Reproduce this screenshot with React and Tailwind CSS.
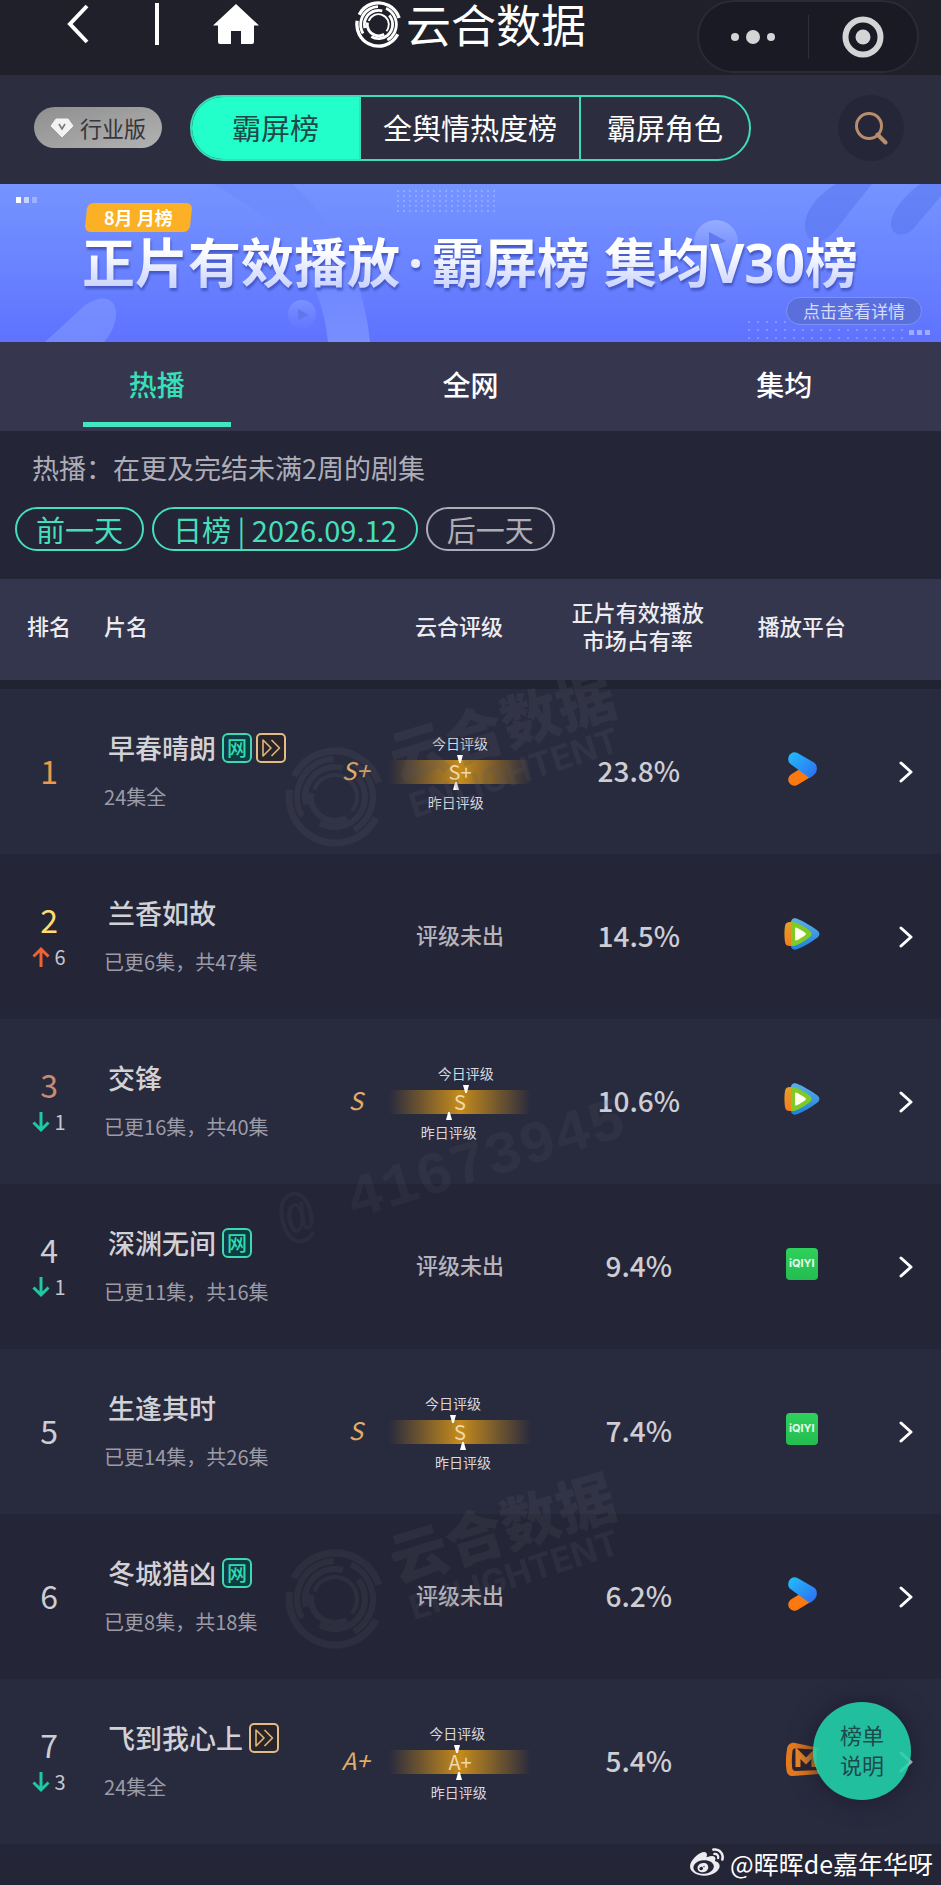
import { useState } from "react";
import { FaWeibo } from "react-icons/fa";
import clsx from "clsx";

const NAV = [
  { id: "screen", label: "霸屏榜", pad: "px-10" },
  { id: "opinion", label: "全舆情热度榜", pad: "px-[22px]" },
  { id: "role", label: "霸屏角色", pad: "px-[26px]" },
];

const TABS = ["热播", "全网", "集均"];

const SHOWS = [
  {
    rank: 1,
    title: "早春晴朗",
    tags: ["net", "fast"],
    info: "24集全",
    grade: "S+",
    today: 50,
    yesterday: 47,
    share: "23.8%",
    platform: "youku",
  },
  {
    rank: 2,
    change: 6,
    title: "兰香如故",
    tags: [],
    info: "已更6集，共47集",
    share: "14.5%",
    platform: "tencent",
  },
  {
    rank: 3,
    change: -1,
    title: "交锋",
    tags: [],
    info: "已更16集，共40集",
    grade: "S",
    today: 54,
    yesterday: 42,
    share: "10.6%",
    platform: "tencent",
  },
  {
    rank: 4,
    change: -1,
    title: "深渊无间",
    tags: ["net"],
    info: "已更11集，共16集",
    share: "9.4%",
    platform: "iqiyi",
  },
  {
    rank: 5,
    title: "生逢其时",
    tags: [],
    info: "已更14集，共26集",
    grade: "S",
    today: 45,
    yesterday: 52,
    share: "7.4%",
    platform: "iqiyi",
  },
  {
    rank: 6,
    title: "冬城猎凶",
    tags: ["net"],
    info: "已更8集，共18集",
    share: "6.2%",
    platform: "youku",
  },
  {
    rank: 7,
    change: -3,
    title: "飞到我心上",
    tags: ["fast"],
    info: "24集全",
    grade: "A+",
    today: 48,
    yesterday: 49,
    share: "5.4%",
    platform: "mango",
  },
];

const RANK_COLORS = {
  1: "text-[#f0984a]",
  2: "text-[#ffdc70]",
  3: "text-[#c98b72]",
};

// radius, stroke width, start angle, sweep
const RINGS = [
  [46, 7, -153, 135],
  [46, 7, 27, 162],
  [38, 6, 150, 118],
  [38, 6, -65, 125],
  [30, 6, -40, 160],
  [30, 6, 165, 120],
  [24, 6, 60, 130],
  [22, 4, -160, 200],
];

function Rings() {
  return RINGS.map(([r, width, start, sweep]) => (
    <circle
      key={`${r}-${start}`}
      cx="50"
      cy="50"
      r={r}
      fill="none"
      stroke="currentColor"
      strokeWidth={width}
      pathLength={360}
      strokeDasharray={`${sweep} ${360 - sweep}`}
      transform={`rotate(${start} 50 50)`}
    />
  ));
}

function AppHeader() {
  return (
    <header className="grid grid-cols-[1fr_auto_1fr] items-start h-[75px] bg-[#1f2029] text-white">
      <div className="flex items-center h-12 pl-[66px]">
        <button aria-label="返回">
          <svg width="24" height="40" viewBox="0 0 24 40" fill="none" stroke="currentColor" strokeWidth="4">
            <path d="M21 2 4 20l17 18" />
          </svg>
        </button>
        <span className="w-1 h-[42px] ml-[65px] bg-white" />
        <button aria-label="首页" className="ml-[54px]">
          <svg width="46" height="40" viewBox="0 0 46 40" fill="currentColor">
            <path d="M23 0 46 21.5H41V38a2 2 0 0 1-2 2H28V27H18v13H7a2 2 0 0 1-2-2V21.5H0Z" />
          </svg>
        </button>
      </div>
      <div className="flex items-center h-12 gap-1">
        <svg width="47" height="47" viewBox="0 0 100 100">
          <Rings />
        </svg>
        <h1 className="text-[45px] leading-[48px]">云合数据</h1>
      </div>
      <div className="justify-self-end flex items-center w-[222px] h-[73px] mr-[22px] rounded-full bg-[#191a23] border-2 border-[#2a2b35] text-[#d4d4d6]">
        <button aria-label="更多" className="flex-1 flex justify-center">
          <svg width="44" height="16" viewBox="0 0 44 16" fill="currentColor">
            <circle cx="4" cy="8" r="4" />
            <circle cx="22" cy="8" r="7" />
            <circle cx="40" cy="8" r="4" />
          </svg>
        </button>
        <span className="w-px h-11 bg-[#2d2e38]" />
        <button aria-label="关闭" className="flex-1 flex justify-center">
          <svg width="42" height="42" viewBox="0 0 42 42">
            <circle cx="21" cy="21" r="17.5" fill="none" stroke="currentColor" strokeWidth="6" />
            <circle cx="21" cy="21" r="7.5" fill="currentColor" />
          </svg>
        </button>
      </div>
    </header>
  );
}

function Toolbar() {
  const [active, setActive] = useState("screen");

  return (
    <div className="flex items-center h-[109px] pb-1 pl-[34px] pr-[37px] bg-[#2c2e40]">
      <button className="flex items-center gap-1.5 h-[41px] px-4 rounded-full bg-linear-to-br from-[#8f8f90] to-[#b2b2b2] text-[#35353b] text-[22px] whitespace-nowrap">
        <svg width="24" height="20" viewBox="0 0 24 20">
          <path d="M6 1h12l5 7-11 11L1 8Z" fill="#f2f2f2" stroke="#f2f2f2" strokeLinejoin="round" />
          <path d="m9 6 3 5 3-5" fill="none" stroke="#77777a" strokeWidth="1.6" />
        </svg>
        行业版
      </button>
      <nav className="flex h-[66px] ml-7 rounded-full border-2 border-[#3ddcb4] overflow-hidden text-[29px] whitespace-nowrap divide-x-2 divide-[#3ddcb4]">
        {NAV.map((item) => (
          <button
            key={item.id}
            onClick={() => setActive(item.id)}
            className={clsx(
              item.pad,
              active === item.id ? "bg-[#22ffca] text-[#1f4a4a]" : "text-white"
            )}
          >
            {item.label}
          </button>
        ))}
      </nav>
      <button aria-label="搜索" className="flex items-center justify-center size-[66px] ml-auto rounded-full bg-[#252638]">
        <svg width="34" height="34" viewBox="0 0 34 34" fill="none" stroke="#b98d6b" strokeWidth="3">
          <circle cx="15" cy="15" r="12.5" />
          <path d="m23.5 23.5 8 8" strokeWidth="4" strokeLinecap="round" />
        </svg>
      </button>
    </div>
  );
}

function BannerArt() {
  return (
    <svg
      className="absolute inset-0 size-full"
      viewBox="0 0 941 158"
      preserveAspectRatio="xMidYMid slice"
    >
      <defs>
        <pattern id="dots" width="6" height="5" patternUnits="userSpaceOnUse">
          <circle cx="2" cy="2" r="0.9" fill="#fff" />
        </pattern>
        <pattern id="dots-wide" width="9" height="8" patternUnits="userSpaceOnUse">
          <circle cx="2" cy="2" r="1" fill="#fff" />
        </pattern>
        <linearGradient id="band" x1="0" y1="0" x2="0" y2="1">
          <stop offset="0" stopColor="#5f7cf5" stopOpacity="0.3" />
          <stop offset="0.5" stopColor="#7c97ff" stopOpacity="0.3" />
          <stop offset="1" stopColor="#8ea6ff" stopOpacity="0.55" />
        </linearGradient>
        <linearGradient id="bubble" x1="0" y1="0" x2="0" y2="1">
          <stop offset="0" stopColor="#a9bbff" stopOpacity="0.7" />
          <stop offset="1" stopColor="#8ba2ff" stopOpacity="0.1" />
        </linearGradient>
      </defs>
      <path d="M213 0h79c45 40 72 95 78 158h-42C322 90 280 35 213 0Z" fill="url(#band)" />
      <path d="M45 158 84 122c16-12 32-10 32 8 0 10-5 20-12 28Z" fill="#8ba4ff" opacity="0.45" />
      <path d="M836 0c-20 12-31 28-31 42 0 20 20 20 32 2L872 0Z" fill="#5671ee" opacity="0.5" />
      <path d="M920 0c-18 14-29 28-29 40 0 12 14 14 22 5L941 12V0Z" fill="#5671ee" opacity="0.5" />
      <circle cx="716" cy="58" r="22" fill="url(#bubble)" />
      <path d="M709 48v17l17-8Z" fill="#6079ee" />
      <circle cx="302" cy="130" r="14" fill="url(#bubble)" opacity="0.5" />
      <path d="M298 125v11l11-5Z" fill="#5f77ec" />
      <rect x="395" y="6" width="102" height="24" fill="url(#dots)" opacity="0.3" />
      <rect x="748" y="134" width="156" height="24" fill="url(#dots-wide)" opacity="0.3" />
      <g fill="#fff">
        <rect x="16" y="13" width="5" height="6" />
        <rect x="24" y="13" width="5" height="6" opacity="0.6" />
        <rect x="32" y="13" width="5" height="6" opacity="0.3" />
        <rect x="909" y="146" width="5" height="5" opacity="0.4" />
        <rect x="917" y="146" width="5" height="5" opacity="0.4" />
        <rect x="925" y="146" width="5" height="5" opacity="0.4" />
      </g>
    </svg>
  );
}

function Banner() {
  return (
    <section className="relative h-[158px] bg-linear-to-b from-[#7694ff] to-[#5f72ff] overflow-hidden">
      <BannerArt />
      <div className="relative flex flex-col h-full pt-[19px] pb-[17px] pl-[82px] pr-[19px]">
        <div className="relative isolate self-start h-[29px] ml-1 px-[18px] text-lg leading-7 font-bold text-white">
          <span className="absolute inset-0 -z-10 -skew-x-6 rounded-md bg-[#fbb025]" />
          8月 月榜
        </div>
        <h2 className="self-start text-[53px] leading-[62px] font-bold whitespace-nowrap bg-linear-to-b from-white from-30% to-[#c9d2ff] to-90% bg-clip-text text-transparent drop-shadow-[1px_3px_1px_#4558c8] font-['Open_Sans','Noto_Sans_CJK_SC',sans-serif]">
          正片有效播放<span className="mx-2">·</span>霸屏榜 集均V30榜
        </h2>
        <button className="self-end mt-auto h-7 px-4 rounded-full bg-[#5a6fdc] border border-[#7d92f5] text-[17px] leading-6 text-[#d3daff]">
          点击查看详情
        </button>
      </div>
    </section>
  );
}

function Tabs() {
  const [active, setActive] = useState("热播");

  return (
    <div className="grid grid-cols-3 h-[89px] bg-[#36364f] text-[28px]">
      {TABS.map((tab) => (
        <button
          key={tab}
          onClick={() => setActive(tab)}
          className={clsx(
            "flex flex-col items-center pb-1 font-medium",
            active === tab ? "text-[#36e0b8]" : "text-white"
          )}
        >
          <span className="flex-1 flex items-center pt-1">{tab}</span>
          <span className={clsx("w-[148px] h-[5px]", active === tab && "bg-[#42e6c0]")} />
        </button>
      ))}
    </div>
  );
}

function DateBar() {
  return (
    <section className="pt-[19px] pb-7">
      <p className="pl-8 text-[27px] leading-9 text-[#adadb8]">
        热播：在更及完结未满2周的剧集
      </p>
      <div className="flex gap-2 mt-[21px] pl-[15px] text-[29px] leading-10 text-[#45dfbb]">
        <button className="px-[19px] rounded-full border-2 border-current">前一天</button>
        <button className="px-[19px] rounded-full border-2 border-current">日榜 | 2026.09.12</button>
        <button className="px-[19px] rounded-full border-2 border-current text-[#adadb8]">后一天</button>
      </div>
    </section>
  );
}

function RankChange({ value }) {
  const up = value > 0;
  return (
    <div className="flex items-center justify-center gap-1 mt-1 text-xl leading-7 text-[#c6c6ce]">
      <svg
        width="18"
        height="22"
        viewBox="0 0 18 22"
        fill="none"
        strokeWidth="3"
        className={up ? "stroke-[#ee6236]" : "stroke-[#1fc9a1] rotate-180"}
      >
        <path d="M9 21V3M1.5 10.5 9 3l7.5 7.5" />
      </svg>
      {Math.abs(value)}
    </div>
  );
}

function Tag({ type }) {
  if (type === "net") {
    return (
      <span className="flex items-center justify-center size-[30px] rounded-md border-2 border-[#40d8b2] bg-[#0f3c42] text-xl leading-none font-medium text-[#2fdcb0]">
        网
      </span>
    );
  }
  return (
    <span className="flex items-center justify-center size-[30px] rounded-[5px] border-2 border-[#e2bc84] bg-[#28242c]">
      <svg width="20" height="20" viewBox="0 0 20 20" fill="none" stroke="#e2b676" strokeWidth="1.6" strokeLinejoin="round">
        <path d="M2 2v16l8-8Z" />
        <path d="m10.500 2 8 8-8 8" />
      </svg>
    </span>
  );
}

function GradeBar({ grade, today, yesterday }) {
  return (
    <div className="relative w-[142px] h-6 mx-auto bg-linear-to-r from-transparent via-[#c68b1c] to-transparent text-center text-xl leading-6 text-[#f0d9a8]">
      {grade}
      <div
        className="absolute bottom-full -mb-[3px] -translate-x-1/2 flex flex-col items-center gap-0.5 text-sm leading-5 text-[#d8d8de] whitespace-nowrap"
        style={{ left: `${today}%` }}
      >
        今日评级
        <svg width="6" height="8" viewBox="0 0 6 8" fill="#fff">
          <path d="M0 0h6L3.800 8H2.200Z" />
        </svg>
      </div>
      <div
        className="absolute top-full -mt-[2px] -translate-x-1/2 flex flex-col items-center gap-0.5 text-sm leading-5 text-[#d8d8de] whitespace-nowrap"
        style={{ left: `${yesterday}%` }}
      >
        <svg width="6" height="8" viewBox="0 0 6 8" fill="#fff">
          <path d="M0 8h6L3.800 0H2.200Z" />
        </svg>
        昨日评级
      </div>
    </div>
  );
}

function PlatformIcon({ name }) {
  if (name === "youku") {
    return (
      <svg width="36" height="36" viewBox="0 0 36 36" className="mx-auto" role="img" aria-label="优酷">
        <defs>
          <linearGradient id="yk" x1="0" y1="0" x2="1" y2="1">
            <stop offset="0.1" stopColor="#23b6fb" />
            <stop offset="1" stopColor="#2f6bf0" />
          </linearGradient>
        </defs>
        <path d="M10.500 28.500 22 21.500" stroke="#fb7a10" strokeWidth="12.500" strokeLinecap="round" />
        <path
          d="M7 2.400C9 1 11.500 1 13.500 2L30 11.500c3.600 2.500 3.700 8 1 11.200-1.500 1.800-3.500 3.300-5.500 4.300L6.500 13C3 10.300 3.800 4.700 7 2.400Z"
          fill="url(#yk)"
        />
      </svg>
    );
  }
  if (name === "tencent") {
    return (
      <svg width="36" height="32" viewBox="0 0 36 32" className="mx-auto" role="img" aria-label="腾讯视频">
        <defs>
          <linearGradient id="tx-b" x1="0" y1="0" x2="0" y2="1">
            <stop offset="0" stopColor="#5cb0e8" />
            <stop offset="1" stopColor="#1f7fdc" />
          </linearGradient>
          <linearGradient id="tx-o" x1="0" y1="0" x2="0" y2="1">
            <stop offset="0" stopColor="#e3a02a" />
            <stop offset="1" stopColor="#f57c1c" />
          </linearGradient>
        </defs>
        <path d="M7 4c0-3 3-4.500 6-3.200 7 2.800 14 7 20.500 11.700 2.500 2 2.500 5 0 7C27 24.500 20 28.500 13 31.200c-3 1.200-5.500 0-6-3Z" fill="url(#tx-b)" />
        <path d="M1 8c.5-3 2-4 5-4h3v24H6c-3 0-4.500-1-5-4-.8-5.500-.8-11 0-16Z" fill="url(#tx-o)" />
        <path d="M7 6.500C7 4 9 3.600 11 4.300c5.500 2.200 10.500 5 15 8.700 2.200 1.900 2.200 4.100 0 6-4.500 3.700-9.500 6.500-15 8.700-2 .7-4 .3-4-2.200Z" fill="#7fca25" />
        <path d="M11 10.500c0-1 .8-1.200 1.800-.8 3.200 1.500 6 3.200 8.600 5.300.8.700.8 1.300 0 2-2.600 2.100-5.400 3.800-8.600 5.300-1 .4-1.800.2-1.800-.8Z" fill="#fffff0" />
      </svg>
    );
  }
  if (name === "iqiyi") {
    return (
      <span className="flex items-center justify-center size-8 mx-auto rounded-[4px] bg-linear-to-b from-[#2fd05c] to-[#24bd50] font-['Inter',sans-serif] text-[11px] font-bold text-[#e6f8ea]">
        iQIYI
      </span>
    );
  }
  return (
    <svg width="34" height="34" viewBox="0 0 34 34" className="mx-auto" role="img" aria-label="芒果TV">
      <path d="M2 7c.5-4 3-6.500 7-6.300L34 6v26L8 34c-4 0-6-2-6.500-5.500C.5 21 .8 14 2 7Z" fill="#e87a1e" />
      <path d="M7.500 9c.3-2 1.500-3 3.500-2.800L34 8v20l-23 1c-2.500 0-3.500-1-3.800-3-.6-6-.4-11.500.3-17Z" fill="#2b2430" />
      <path d="M13 25V11l8 8 8-8v14" fill="none" stroke="#f08a2a" strokeWidth="5" />
    </svg>
  );
}

function ShowRow({ show }) {
  return (
    <tr className="h-[165px] odd:bg-[#282a3e] even:bg-[#242536]">
      <td className="pl-1 pb-1 text-center">
        <div className={clsx("text-[32px] leading-10", RANK_COLORS[show.rank] || "text-[#cdcdd4]")}>
          {show.rank}
        </div>
        {show.change && <RankChange value={show.change} />}
      </td>
      <td className="pl-2.5 pb-1">
        <div className="flex items-center gap-1.5 pl-1 text-[27px] leading-[38px] font-medium text-[#d2d2d6] whitespace-nowrap">
          {show.title}
          <span className="flex gap-1">
            {show.tags.map((tag) => (
              <Tag key={tag} type={tag} />
            ))}
          </span>
        </div>
        <div className="mt-4 text-xl leading-7 text-[#9c9ca8] whitespace-nowrap">{show.info}</div>
      </td>
      <td className="pr-1 pb-1 text-center text-2xl italic text-[#e0ad68]">{show.grade}</td>
      <td className="pr-0.5 text-center">
        {show.grade ? (
          <GradeBar grade={show.grade} today={show.today} yesterday={show.yesterday} />
        ) : (
          <span className="block pb-1 text-[22px] font-medium text-[#b4b4be]">评级未出</span>
        )}
      </td>
      <td className="pr-0.5 pb-1 text-center text-[28px] font-medium text-[#cdcdd4]">{show.share}</td>
      <td className="pl-1 pb-1.5">
        <PlatformIcon name={show.platform} />
      </td>
      <td className="pr-7">
        <a href="#detail" aria-label={show.title} className="flex justify-end">
          <svg width="14" height="22" viewBox="0 0 14 22" fill="none" stroke="#fff" strokeWidth="3" strokeLinecap="round" strokeLinejoin="round">
            <path d="m2 2 10 9-10 9" />
          </svg>
        </a>
      </td>
    </tr>
  );
}

function BrandMark({ className }) {
  return (
    <svg width="380" height="200" viewBox="0 0 380 200" className={clsx("absolute left-[280px]", className)}>
      <g transform="translate(5 89)">
        <Rings />
      </g>
      <text
        x="222"
        y="90"
        fontSize="58"
        fontWeight="900"
        textAnchor="middle"
        fill="currentColor"
        transform="rotate(-17 222 68)"
      >
        云合数据
      </text>
      <text
        x="234"
        y="127"
        fontSize="34"
        fontWeight="700"
        textAnchor="middle"
        fill="currentColor"
        className="font-['Inter',sans-serif]"
        transform="rotate(-18 234 115)"
      >
        ENLIGHTENT
      </text>
    </svg>
  );
}

function Watermarks() {
  return (
    <div className="absolute inset-x-0 top-[101px] bottom-0 overflow-hidden pointer-events-none text-[#5a5a60] opacity-20">
      <BrandMark className="-top-[22px]" />
      <svg width="400" height="220" viewBox="0 0 400 220" className="absolute left-[270px] top-[380px] opacity-80">
        <text
          x="8"
          y="175"
          fontSize="60"
          fontWeight="700"
          fill="currentColor"
          className="font-['Liberation_Mono',monospace]"
          transform="rotate(-17 27 155)"
        >
          @ 41673945
        </text>
      </svg>
      <BrandMark className="top-[780px]" />
    </div>
  );
}

function RankTable() {
  const th = "pb-2.5 border-b-[9px] border-[#222332] font-medium";

  return (
    <div className="relative">
      <table className="w-full table-fixed border-separate border-spacing-0">
        <colgroup>
          <col className="w-[10%]" />
          <col className="w-[25%]" />
          <col className="w-[6%]" />
          <col className="w-[16%]" />
          <col className="w-[22%]" />
          <col className="w-[12%]" />
          <col className="w-[9%]" />
        </colgroup>
        <thead>
          <tr className="h-[110px] bg-[#34364d] text-[22px] leading-7 text-[#ececf0]">
            <th className={clsx(th, "pl-1")}>排名</th>
            <th colSpan={2} className={clsx(th, "pl-2.5 text-left")}>片名</th>
            <th className={clsx(th, "pr-1")}>云合评级</th>
            <th className={clsx(th, "pr-1")}>
              正片有效播放
              <br />
              市场占有率
            </th>
            <th className={clsx(th, "pl-1")}>播放平台</th>
            <th className={th} />
          </tr>
        </thead>
        <tbody>
          {SHOWS.map((show) => (
            <ShowRow key={show.rank} show={show} />
          ))}
        </tbody>
      </table>
      <Watermarks />
    </div>
  );
}

export default function App() {
  return (
    <div className="relative bg-[#242536] font-['Noto_Sans_CJK_SC',sans-serif]">
      <AppHeader />
      <Toolbar />
      <Banner />
      <Tabs />
      <DateBar />
      <RankTable />
      <footer className="flex items-center justify-end gap-1.5 h-[41px] pr-2 pb-1 text-[25px] leading-8 text-white">
        <FaWeibo className="size-[34px] text-[#ececee]" />
        @晖晖de嘉年华呀
      </footer>
      <button className="absolute right-[30px] bottom-[85px] size-[98px] pb-1 rounded-full bg-[#22cca6]/92 shadow-[0_0_24px_#1d1e2c] text-[22px] leading-[30px] text-[#1d4a4c]">
        榜单
        <br />
        说明
      </button>
    </div>
  );
}
